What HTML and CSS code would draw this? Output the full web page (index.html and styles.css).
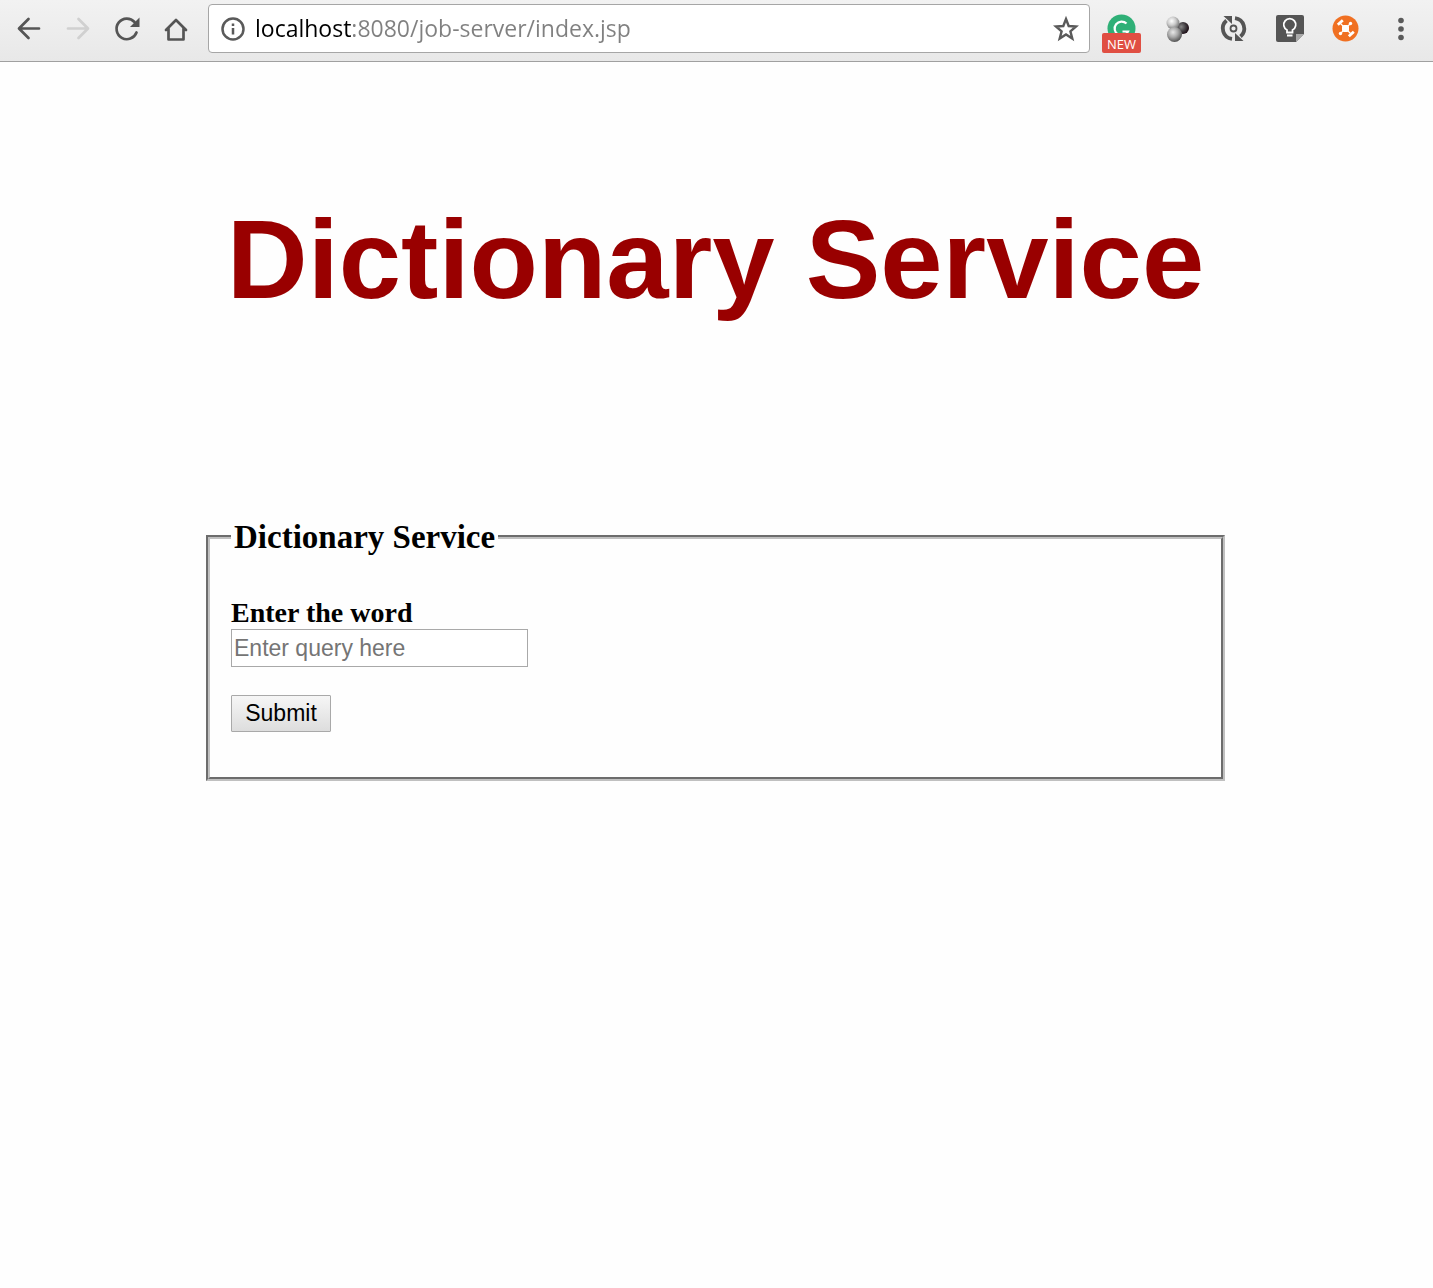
FILE: index.html
```html
<!DOCTYPE html>
<html lang="en">
<head>
<meta charset="utf-8">
<meta name="viewport" content="width=device-width, initial-scale=1">
<title>Dictionary Service</title>
<link rel="stylesheet" href="styles.css">
</head>
<body>
<header class="toolbar">
  <nav class="nav" aria-label="Navigation">
    <button class="tool" type="button" aria-label="Back">
      <svg viewBox="0 0 49 49" class="line"><path d="M35 24.500H15.500M24.500 15 15 24.500l9.500 9.500"/></svg>
    </button>
    <button class="tool tool-off" type="button" aria-label="Forward" disabled>
      <svg viewBox="0 0 49 49" class="line"><path d="M15 24.500H34.500M25.500 15l9.500 9.500L25.500 34"/></svg>
    </button>
    <button class="tool" type="button" aria-label="Reload">
      <svg viewBox="0 0 49 49" class="line"><path d="M34.500 28.500A10.300 10.300 0 1 1 32.500 18"/><path class="solid" d="M37.500 13.500V23H28z"/></svg>
    </button>
    <button class="tool" type="button" aria-label="Home">
      <svg viewBox="0 0 49 49" class="line"><path d="M15 26 25 16 35 26M17.500 24.500V35.500H32.500V24.500"/></svg>
    </button>
  </nav>
  <form class="address">
    <svg class="info" viewBox="0 0 26 26"><circle cx="13" cy="13" r="10.500"/><path d="M13 12v6.500M13 7.500v2.500"/></svg>
    <input class="url" type="text" aria-label="Address" value="localhost:8080/job-server/index.jsp">
    <button class="star" type="button" aria-label="Bookmark">
      <svg viewBox="0 0 28 28"><path d="M14 4l2.700 7 7.300.5-5.600 4.800 1.900 7.200L14 19.500l-6.300 4 1.900-7.200L4 11.500l7.300-.5z"/></svg>
    </button>
  </form>
  <div class="extensions">
    <button class="ext" type="button" aria-label="Writing assistant">
      <svg viewBox="0 0 56 49"><circle cx="28.500" cy="24.500" r="14" fill="#2fb077"/><path d="M33.500 19.500A7 7 0 1 0 35 27.500H29.500" fill="none" stroke="#fff" stroke-width="2.200"/></svg>
      <span class="badge">NEW</span>
    </button>
    <button class="ext" type="button" aria-label="Molecules">
      <svg viewBox="0 0 56 49">
        <defs>
          <radialGradient id="pale" cx=".4" cy=".35" r=".65"><stop offset="0" stop-color="#fff"/><stop offset=".5" stop-color="#ccc"/><stop offset="1" stop-color="#777"/></radialGradient>
          <radialGradient id="grey" cx=".4" cy=".35" r=".65"><stop offset="0" stop-color="#e8e8e8"/><stop offset=".5" stop-color="#aaa"/><stop offset="1" stop-color="#555"/></radialGradient>
          <radialGradient id="dark" cx=".35" cy=".4" r=".65"><stop offset="0" stop-color="#888"/><stop offset=".6" stop-color="#403c40"/><stop offset="1" stop-color="#1c0c14"/></radialGradient>
        </defs>
        <circle cx="34" cy="24" r="6" fill="url(#dark)"/><circle cx="24" cy="19" r="6.500" fill="url(#pale)"/><circle cx="25.500" cy="30.500" r="7.500" fill="url(#grey)"/>
      </svg>
    </button>
    <button class="ext" type="button" aria-label="Sync">
      <svg viewBox="0 0 56 49"><g fill="none" stroke="#555" stroke-width="3.800"><path d="M27 34.900A10.500 10.500 0 0 1 21.500 16.500M30 14.100A10.500 10.500 0 0 1 35.500 32.500"/><circle cx="28.500" cy="24.500" r="3" stroke-width="1.800"/></g><path fill="#555" d="M18.500 12H27v8zM38.500 37H30v-8z"/></svg>
    </button>
    <button class="ext" type="button" aria-label="Notes">
      <svg viewBox="0 0 56 49"><path fill="#555" d="M17 11h24a2 2 0 0 1 2 2v17l-8 8H17a2 2 0 0 1-2-2V13a2 2 0 0 1 2-2z"/><path fill="#aaa" d="M43 30h-8v8z"/><path d="M26 28.500v-2.500a6 6 0 1 1 5.500 0V28.500zM26 31.500h5.500" fill="none" stroke="#fff" stroke-width="1.800"/></svg>
    </button>
    <button class="ext" type="button" aria-label="Drone">
      <svg viewBox="0 0 56 49"><circle cx="28.500" cy="24.500" r="13" fill="#f07022"/><g stroke="#fff" fill="none"><path stroke-width="1.200" d="M23.500 19.500l10 10M33.500 19.500l-10 10"/><path stroke-width="2.800" d="M20.800 20.800l5-4.500M31.800 32.300l5-4.500"/></g><g fill="#fff"><rect x="25" y="21" width="7" height="7" rx="2"/><circle cx="33.500" cy="19.500" r="1.700"/><circle cx="23.500" cy="29.500" r="1.700"/></g></svg>
    </button>
    <button class="ext" type="button" aria-label="Menu">
      <svg viewBox="0 0 56 49" fill="#5a5a5a"><circle cx="28" cy="16.500" r="2.800"/><circle cx="28" cy="25" r="2.800"/><circle cx="28" cy="33.500" r="2.800"/></svg>
    </button>
  </div>
</header>
<main class="page">
  <h1 class="title">Dictionary Service</h1>
  <form class="lookup">
    <fieldset class="panel">
      <legend class="legend">Dictionary Service</legend>
      <label class="label" for="word">Enter the word</label>
      <input class="word" id="word" type="text" placeholder="Enter query here">
      <button class="submit" type="submit">Submit</button>
    </fieldset>
  </form>
</main>
</body>
</html>
```
FILE: styles.css
```css
* { box-sizing: border-box; }
body { margin: 0; background: #fefefe; color: #000; font-family: "Liberation Serif", "Times New Roman", serif; }
button { margin: 0; padding: 0; border: 0; background: none; }
svg { display: block; }

.toolbar { display: flex; padding: 4px 4px 8px; background: linear-gradient(#f2f2f2, #e8e8e8); border-bottom: 1px solid #a0a0a0; }
.nav { display: flex; margin-right: 8px; }
.tool { width: 49px; height: 49px; color: #555; }
.tool-off { color: #d0d0d0; }
.line { fill: none; stroke: currentColor; stroke-width: 2.7; stroke-linecap: round; stroke-linejoin: round; }
.solid { fill: currentColor; stroke: none; }

.address { flex: 1; min-width: 0; display: flex; align-items: center; height: 49px; padding: 0 9px 0 11px; background: #fff; border: 1px solid #a6a6a6; border-radius: 4px; }
.info { flex: none; width: 26px; height: 26px; fill: none; stroke: #5a5a5a; stroke-width: 2.5; }
/* Host name in black, the rest of the address in grey */
.url {
  flex: 1; min-width: 0; height: 40px; margin-left: 9px; padding: 0 0 2px; border: 0; outline: 0;
  font: 23px "Open Sans", "Segoe UI", sans-serif;
  color: #808080;
  background: linear-gradient(90deg, #000 96px, #808080 96px);
  -webkit-background-clip: text; background-clip: text;
  -webkit-text-fill-color: transparent;
}
.star { width: 28px; height: 28px; }
.star svg { fill: none; stroke: #5a5a5a; stroke-width: 2.4; }

.extensions { display: flex; margin-left: 3px; }
.ext { position: relative; width: 56px; height: 49px; }
.badge { position: absolute; left: 9px; top: 29px; width: 39px; height: 20px; border-radius: 2px; background: #e04f43; color: #fff; font: 13px/22px "Open Sans", sans-serif; text-align: center; }

.page { padding: 134px 16px 40px 14px; }
.title { margin: 0 0 194px; color: #900; font: bold 112px/128px "Liberation Sans", Arial, sans-serif; text-align: center; }
.lookup { max-width: 1019px; margin: 0 auto; }
.panel { display: flex; flex-direction: column; align-items: flex-start; margin: 0; padding: 41px 21px 45px; border: 4px groove #c0c0c0; }
.legend { padding: 0 3px; font-size: 33px; line-height: 38px; font-weight: bold; }
.label { font-size: 28px; line-height: 32px; font-weight: bold; }
.word, .submit { font: 23px "Liberation Sans", Arial, sans-serif; border: 1px solid #a9a9a9; }
.word { width: 297px; max-width: 100%; height: 38px; padding: 0 2px; background: #fff; }
.word::placeholder { color: #757575; opacity: 1; }
.submit { width: 100px; height: 37px; margin-top: 28px; color: #000; background: linear-gradient(#f6f6f6, #ddd); border-radius: 1px; }
```
